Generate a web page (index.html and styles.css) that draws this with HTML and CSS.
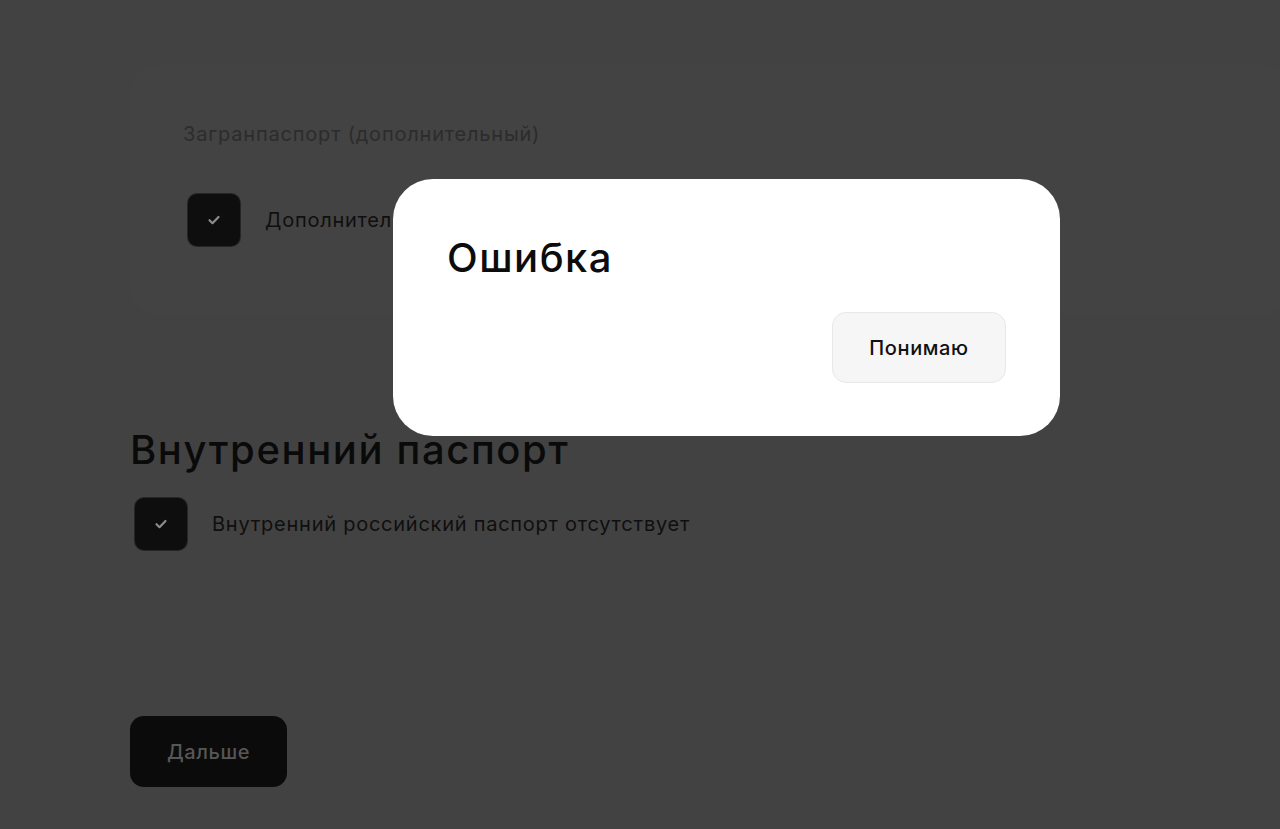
FILE: index.html
```html
<!DOCTYPE html>
<html lang="ru">
<head>
  <meta charset="utf-8">
  <title>Документы</title>
  <link rel="stylesheet" href="styles.css">
</head>
<body>
  <div class="page">
    <div class="card">
      <div class="card-label">Загранпаспорт (дополнительный)</div>
      <label class="check-row">
        <span class="checkbox">
          <svg viewBox="0 0 24 24" fill="none"><path d="M7.5 12.2l3 3 6-6.2" stroke="currentColor" stroke-width="2.2" stroke-linecap="round" stroke-linejoin="round"/></svg>
        </span>
        <span class="check-text">Дополнительный загранпаспорт отсутствует</span>
      </label>
    </div>

    <h2 class="section-title">Внутренний паспорт</h2>
    <label class="check-row">
      <span class="checkbox">
        <svg viewBox="0 0 24 24" fill="none"><path d="M7.5 12.2l3 3 6-6.2" stroke="currentColor" stroke-width="2.2" stroke-linecap="round" stroke-linejoin="round"/></svg>
      </span>
      <span class="check-text">Внутренний российский паспорт отсутствует</span>
    </label>

    <button class="next-button" type="button">Дальше</button>
  </div>

  <!-- error dialog -->
  <div class="modal">
    <div class="modal-title">Ошибка</div>
    <div class="modal-actions">
      <button class="modal-button" type="button">Понимаю</button>
    </div>
  </div>
</body>
</html>
```

FILE: styles.css
```css
* {
  margin: 0;
  padding: 0;
  box-sizing: border-box;
  font-family: Inter, 'Noto Sans', sans-serif;
}

html, body {
  height: 100%;
  overflow: hidden;
}

body {
  background: #424242;
  color: #0c0c0c;
}

.page {
  display: flex;
  flex-direction: column;
  align-items: flex-start;
  padding: 65px 0 0 130px;
}

.card {
  width: 1160px;
  height: 250px;
  padding: 55px 0 0 53px;
  background: #434343;
  border-radius: 28px;
  display: flex;
  flex-direction: column;
  gap: 46px;
}

.card-label {
  font-size: 20px;
  line-height: 28px;
  letter-spacing: 0.8px;
  color: #2c2c2c;
}

.check-row {
  display: flex;
  align-items: center;
  gap: 25px;
}

.checkbox {
  width: 52px;
  height: 52px;
  margin-left: 5px;
  border-radius: 9px;
  background: #0e0e0e;
  color: #8c8c8c;
  display: flex;
  align-items: center;
  justify-content: center;
  box-shadow: 0 0 0 1px #262626;
}

.checkbox svg {
  width: 24px;
  height: 24px;
}

.check-text {
  font-size: 20px;
  line-height: 28px;
  letter-spacing: 0.75px;
  color: #0f0f0f;
}

.section-title {
  font-size: 40px;
  line-height: 48px;
  font-weight: 500;
  letter-spacing: 1.6px;
  color: #0a0a0a;
  margin-top: 111px;
  margin-bottom: 24px;
}

.next-button {
  margin-top: 166px;
  width: 157px;
  height: 71px;
  border: none;
  border-radius: 14px;
  background: #0b0b0b;
  color: #565656;
  font-size: 20px;
  font-weight: 500;
  letter-spacing: 0.6px;
}

.modal {
  position: absolute;
  left: 393px;
  top: 179px;
  width: 667px;
  height: 257px;
  padding: 55px 54px 53px 54px;
  background: #ffffff;
  border-radius: 40px;
  display: flex;
  flex-direction: column;
  gap: 30px;
}

.modal-title {
  font-size: 40px;
  line-height: 48px;
  font-weight: 500;
  letter-spacing: 1.5px;
  color: #0c0c0c;
}

.modal-actions {
  display: flex;
  justify-content: flex-end;
}

.modal-button {
  width: 174px;
  height: 71px;
  border: 1px solid #e8e8e8;
  border-radius: 14px;
  background: #f6f6f6;
  color: #111111;
  font-size: 20px;
  font-weight: 500;
  letter-spacing: 0.6px;
}
```
